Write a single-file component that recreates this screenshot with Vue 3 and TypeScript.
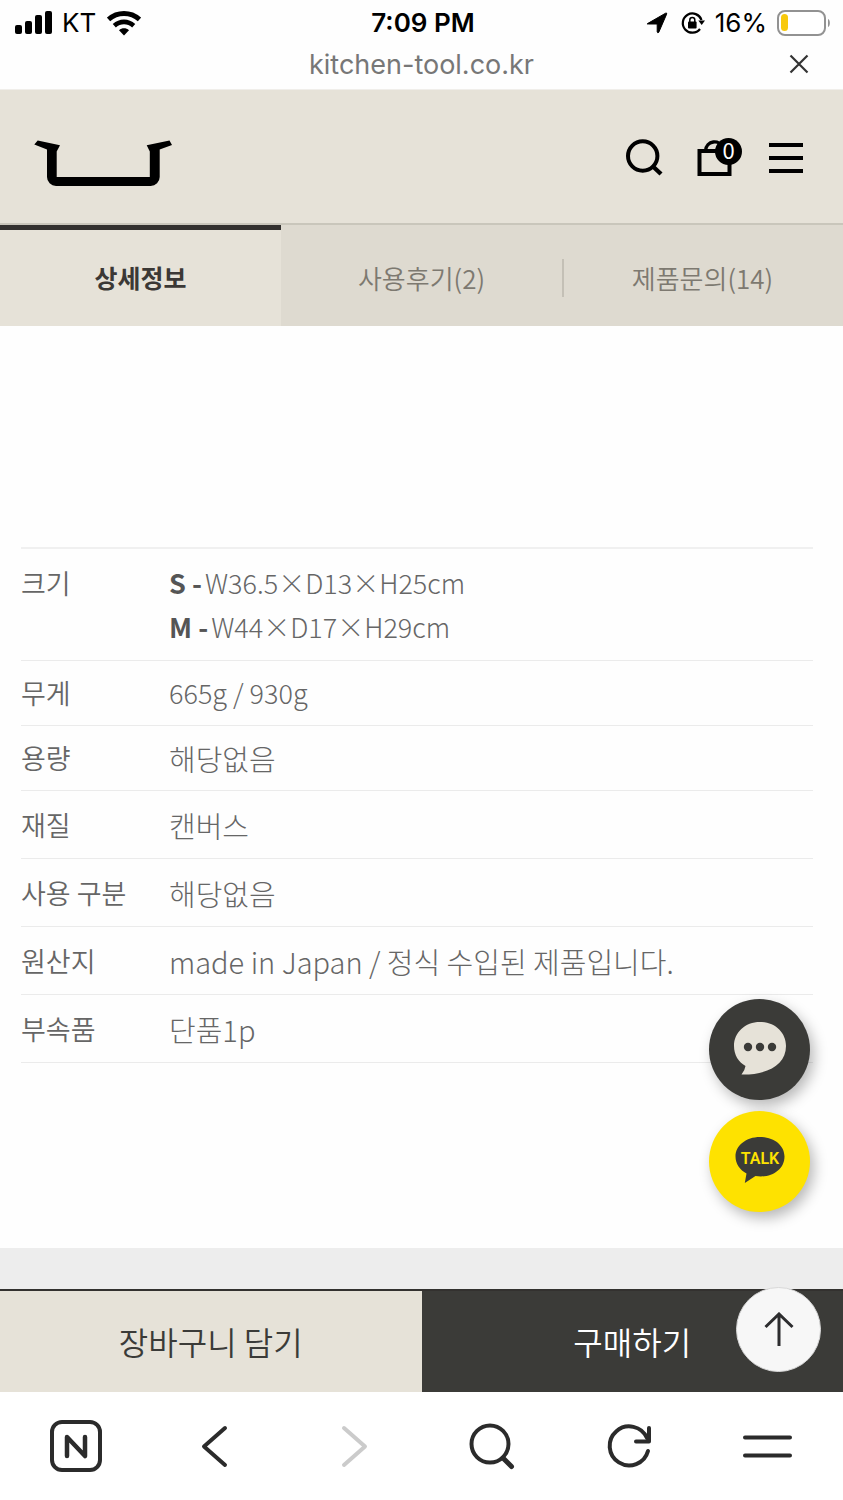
<script setup lang="ts">
import { ref } from 'vue'

interface SpecLine {
  size?: string
  text: string
}

interface Spec {
  label: string
  lines: SpecLine[]
  compact?: boolean
  measure?: boolean
}

const tabs: string[] = ['상세정보', '사용후기(2)', '제품문의(14)']
const activeTab = ref(0)
const cartCount = ref(0)

const specs: Spec[] = [
  {
    label: '크기',
    lines: [
      { size: 'S -', text: 'W36.5×D13×H25cm' },
      { size: 'M -', text: 'W44×D17×H29cm' },
    ],
    measure: true,
  },
  { label: '무게', lines: [{ text: '665g / 930g' }], compact: true, measure: true },
  { label: '용량', lines: [{ text: '해당없음' }], compact: true },
  { label: '재질', lines: [{ text: '캔버스' }] },
  { label: '사용 구분', lines: [{ text: '해당없음' }] },
  { label: '원산지', lines: [{ text: 'made in Japan / 정식 수입된 제품입니다.' }] },
  { label: '부속품', lines: [{ text: '단품1p' }] },
]
</script>

<template>
  <div class="page">
    <div class="status">
      <div class="status-side">
        <svg width="38" height="24" viewBox="0 0 38 24" aria-hidden="true">
          <rect x="0" y="14" width="7" height="9" rx="2" />
          <rect x="10" y="10" width="7" height="13" rx="2" />
          <rect x="20" y="4" width="7" height="19" rx="2" />
          <rect x="30" y="0" width="7" height="23" rx="2" />
        </svg>
        <span>KT</span>
        <svg class="wifi" width="34" height="25" viewBox="0 0 34 25" aria-hidden="true">
          <path d="M1.500 8.500C10.500 0.500 23.500 0.500 32.500 8.500" fill="none" stroke="#000" stroke-width="5" />
          <path d="M7.300 14.800C13 9.600 21 9.600 26.700 14.800" fill="none" stroke="#000" stroke-width="4.600" />
          <path d="M12 19.200C15 16.600 19 16.600 22 19.200L17 24.400Z" />
        </svg>
      </div>
      <span class="time">7:09 PM</span>
      <div class="status-side status-end">
        <svg width="22" height="22" viewBox="0 0 22 22" aria-hidden="true">
          <path d="M1.500 11.600L19.600 1.200Q21.200.5 20.600 2.200L12.800 20.200Q11.800 21.500 11.200 20V12H2.400Q.6 12.300 1.500 11.600Z" stroke="#000" stroke-width="1" />
        </svg>
        <svg class="lock" width="24" height="24" viewBox="0 0 24 24" aria-hidden="true">
          <path d="M20.500 9A9.600 9.600 0 1 0 19 18" fill="none" stroke="#000" stroke-width="2.200" />
          <path d="M17.300 9.500H24L20.700 14Z" />
          <rect x="7" y="10.500" width="8.600" height="7" rx="1" />
          <path d="M8.800 11V9a2.500 2.500 0 0 1 5 0V11" fill="none" stroke="#000" stroke-width="1.500" />
        </svg>
        <span>16%</span>
        <svg width="54" height="26" viewBox="0 0 54 26" aria-hidden="true">
          <rect x="1" y="1" width="47" height="24" rx="7" fill="#fff" stroke="#929292" stroke-width="2" />
          <rect x="4" y="4" width="7" height="17" rx="3.500" fill="#f8c90c" />
          <path d="M51 9C53.500 10 53.500 16 51 17Z" fill="#929292" />
        </svg>
      </div>
    </div>

    <div class="address">
      <span class="url">kitchen-tool.co.kr</span>
      <button class="icon-button close" type="button" aria-label="닫기">
        <svg width="20" height="20" viewBox="0 0 20 20">
          <path d="M1.500 1.500L18.500 18.500M18.500 1.500L1.500 18.500" fill="none" stroke="#333" stroke-width="2.200" />
        </svg>
      </button>
    </div>

    <header class="header">
      <a class="logo" href="#" aria-label="홈">
        <svg width="138" height="58" viewBox="34 129 138 58">
          <path d="M37.700 140.600L60 145.300L56.700 151.500V177H149.800V151.500L146.700 145.300L169.500 140.600L172 145L159.700 149.600V177a9 9 0 0 1-9 9H56a9 9 0 0 1-9-9V149.600L34.300 144.600Z" />
        </svg>
      </a>
      <div class="actions">
        <button class="icon-button" type="button" aria-label="검색">
          <svg width="46" height="40" viewBox="0 0 46 40">
            <circle cx="18.700" cy="18" r="14.700" fill="none" stroke="#000" stroke-width="4" />
            <path d="M29 28.500L37 36" stroke="#000" stroke-width="4.400" />
          </svg>
        </button>
        <button class="icon-button bag" type="button" aria-label="장바구니">
          <svg width="46" height="40" viewBox="0 0 46 40">
            <rect x="3.500" y="13" width="30" height="23" fill="none" stroke="#000" stroke-width="4" />
            <path d="M9.500 13C10 2 24 1 27 10" fill="none" stroke="#000" stroke-width="3.400" />
          </svg>
          <span class="badge">{{ cartCount }}</span>
        </button>
        <button class="icon-button" type="button" aria-label="메뉴">
          <svg width="36" height="40" viewBox="0 0 36 40">
            <path d="M1 7H35M1 20H35M1 33H35" stroke="#000" stroke-width="4" />
          </svg>
        </button>
      </div>
    </header>

    <nav class="tabs">
      <button
        v-for="(tab, i) in tabs"
        :key="tab"
        type="button"
        class="tab"
        :class="{ active: i === activeTab }"
        @click="activeTab = i"
      >
        {{ tab }}
      </button>
    </nav>

    <main class="content">
      <table class="specs">
        <tbody>
          <tr
            v-for="spec in specs"
            :key="spec.label"
            :class="{ compact: spec.compact, measure: spec.measure }"
          >
            <th scope="row">{{ spec.label }}</th>
            <td>
              <div v-for="line in spec.lines" :key="line.text">
                <strong v-if="line.size">{{ line.size }}</strong>{{ line.text }}
              </div>
            </td>
          </tr>
        </tbody>
      </table>

      <div class="chats">
        <button class="chat" type="button" aria-label="채팅 상담">
          <svg width="54" height="54" viewBox="0 0 54 54">
            <path d="M27 1C12 1 1 11.500 1 25C1 34 5.500 41 12.500 45Q12 49 8.500 53.500C34 54 53 44 53 25C53 11.500 42 1 27 1Z" fill="#e6e2d8" />
            <g fill="#3b3b38">
              <circle cx="15" cy="26" r="4.200" />
              <circle cx="27" cy="26" r="4.200" />
              <circle cx="39" cy="26" r="4.200" />
            </g>
          </svg>
        </button>
        <button class="chat talk" type="button" aria-label="카카오톡 상담">
          <svg width="50" height="48" viewBox="0 0 50 48">
            <path d="M25 1C11 1 .5 9.500 .5 20.500C.5 28 5 34 11.500 37.500L9.800 47L20.500 40C36 42.500 49.500 34 49.500 20.500C49.500 9.500 39 1 25 1Z" fill="#3b3b38" />
            <text x="25" y="28" text-anchor="middle" class="talk-text">TALK</text>
          </svg>
        </button>
      </div>
    </main>

    <div class="band"></div>

    <div class="purchase">
      <button class="cart" type="button">장바구니 담기</button>
      <button class="buy" type="button">구매하기</button>
      <button class="to-top" type="button" aria-label="맨 위로">
        <svg width="30" height="36" viewBox="0 0 30 36">
          <path d="M15 34V2M1.500 15L15 2L28.500 15" fill="none" stroke="#2d2d2f" stroke-width="3" />
        </svg>
      </button>
    </div>

    <nav class="browser">
      <button class="icon-button" type="button" aria-label="네이버 홈">
        <svg class="glyph" viewBox="0 0 52 52">
          <rect x="2" y="2" width="48" height="48" rx="10" stroke-width="4" />
          <path d="M17 36V17L35 36V17" stroke-width="4.500" />
        </svg>
      </button>
      <button class="icon-button" type="button" aria-label="뒤로">
        <svg class="glyph" viewBox="0 0 52 52"><path d="M37 8L16 26.500L37 45" /></svg>
      </button>
      <button class="icon-button" type="button" aria-label="앞으로" disabled>
        <svg class="glyph off" viewBox="0 0 52 52"><path d="M18 8L39 26.500L18 45" /></svg>
      </button>
      <button class="icon-button" type="button" aria-label="검색">
        <svg class="glyph" viewBox="0 0 52 52">
          <circle cx="25" cy="24" r="18.500" />
          <path d="M38 38L46.500 46.500" stroke-width="5" />
        </svg>
      </button>
      <button class="icon-button" type="button" aria-label="새로고침">
        <svg class="glyph" viewBox="0 0 52 52">
          <path d="M45 31A19.500 19.500 0 1 1 44 18" />
          <path d="M46 8V21.500H33" />
        </svg>
      </button>
      <button class="icon-button" type="button" aria-label="메뉴">
        <svg class="glyph" viewBox="0 0 52 52"><path d="M4 17.500H49M4 35.500H49" /></svg>
      </button>
    </nav>
  </div>
</template>

<style>
body {
  margin: 0;
  background: #fff;
}
</style>

<style scoped>
.page {
  display: flex;
  flex-direction: column;
  min-height: 100vh;
  background: #fefefe;
  font-family: "Noto Sans CJK KR", sans-serif;
  color: #3b3b38;
}

button {
  margin: 0;
  padding: 0;
  border: 0;
  background: none;
  color: inherit;
  font: inherit;
  cursor: pointer;
}

svg {
  display: block;
}

.icon-button {
  flex: none;
}

.status {
  display: grid;
  grid-template-columns: 1fr auto 1fr;
  align-items: center;
  height: 46px;
  padding: 0 12px 0 15px;
  font: 400 26px/32px Inter, sans-serif;
  color: #000;
}

.status-side {
  display: flex;
  align-items: center;
  gap: 9px;
}

.status-end {
  justify-content: flex-end;
  gap: 10px;
}

.wifi {
  margin-left: 2px;
}

.lock {
  margin-left: 3px;
}

.time {
  font-weight: 600;
}

.address {
  display: grid;
  grid-template-columns: 1fr auto 1fr;
  align-items: center;
  height: 43px;
  padding: 0 34px;
  border-bottom: 1px solid #f0eeea;
  font: 400 27px/36px Inter, sans-serif;
  color: #777;
}

.url {
  grid-column: 2;
  padding-bottom: 6px;
}

.close {
  justify-self: end;
  padding-bottom: 8px;
}

.header {
  display: flex;
  align-items: center;
  justify-content: space-between;
  padding: 39px 39px 36px 34px;
  border-bottom: 2px solid #c9c6bb;
  background: #e6e2d8;
}

.actions {
  display: flex;
  align-items: center;
  gap: 26px;
}

.bag {
  position: relative;
}

.badge {
  position: absolute;
  top: 0;
  right: 0;
  width: 27px;
  height: 27px;
  border-radius: 50%;
  background: #000;
  color: #fff;
  font-size: 22px;
  line-height: 23px;
  text-align: center;
}

.tabs {
  display: grid;
  grid-template-columns: repeat(3, 1fr);
}

.tab {
  padding: 30px 8px 31px;
  border-top: 5px solid #dedad0;
  background: #dedad0;
  color: #7d7970;
  font-size: 26px;
  font-weight: 350;
  line-height: 35px;
}

.tab:nth-child(3) {
  background: linear-gradient(#c4c0b6, #c4c0b6) left center / 2px 38px no-repeat #dedad0;
}

.tab.active {
  border-top-color: #33312f;
  background: #e6e2d8;
  color: #3b3835;
  font-size: 25px;
  font-weight: 700;
}

.content {
  position: relative;
  flex: 1;
  padding: 221px 30px 185px 21px;
}

.specs {
  width: 100%;
  border-collapse: separate;
  border-spacing: 0;
  border-top: 2px solid #f0f0f0;
  line-height: 44px;
}

.specs th,
.specs td {
  padding: 12px 0 11px;
  border-bottom: 1px solid #ebebeb;
  text-align: left;
  vertical-align: top;
}

.specs th {
  width: 148px;
  color: #666;
  font-size: 27px;
  font-weight: 350;
}

.specs td {
  color: #666;
  font-size: 29px;
  font-weight: 300;
}

.specs .measure td {
  font-size: 27px;
}

.specs strong {
  margin-right: 3px;
  color: #555;
  font-weight: 700;
}

.specs .compact th,
.specs .compact td {
  padding: 10px 0;
}

.chats {
  position: absolute;
  right: 33px;
  bottom: 36px;
  display: grid;
  gap: 11px;
}

.chat {
  display: grid;
  place-items: center;
  width: 101px;
  height: 101px;
  padding-bottom: 3px;
  border-radius: 50%;
  background: #3b3b38;
  box-shadow: 4px 6px 14px rgba(0, 0, 0, 0.28);
}

.talk {
  background: #fee200;
}

.talk-text {
  fill: #fee200;
  font: 600 16px Roboto, sans-serif;
}

.band {
  height: 41px;
  background: #ededed;
}

.purchase {
  position: relative;
  display: grid;
  grid-template-columns: 1fr 1fr;
  border-top: 2px solid #33312f;
  font-size: 32px;
  font-weight: 350;
  line-height: 46px;
}

.cart,
.buy {
  padding: 27px 8px 28px;
}

.cart {
  background: #e6e2d8;
}

.buy {
  background: #3b3b38;
  color: #fff;
}

.to-top {
  position: absolute;
  right: 22px;
  bottom: 20px;
  display: grid;
  place-items: center;
  width: 85px;
  height: 85px;
  border: 1px solid #d8d8d8;
  border-radius: 50%;
  background: #f7f7f7;
}

.browser {
  display: flex;
  align-items: center;
  justify-content: space-between;
  padding: 28px 50px;
  background: #fff;
}

.glyph {
  width: 52px;
  height: 52px;
  fill: none;
  stroke: #2b2b2b;
  stroke-width: 4;
  stroke-linecap: round;
  stroke-linejoin: round;
}

.off {
  stroke: #cbcbcb;
}
</style>
